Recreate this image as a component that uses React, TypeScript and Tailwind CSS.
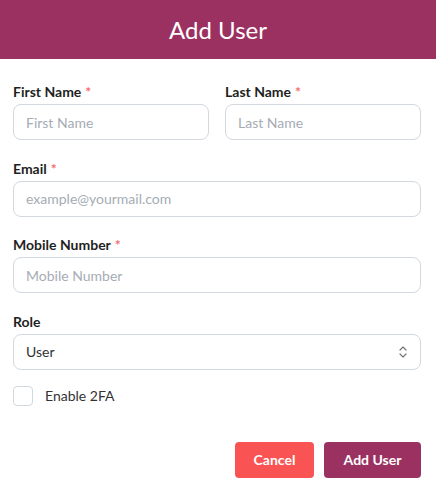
import React from "react";

function Label({ text, required }: { text: string; required?: boolean }) {
  return (
    <label className="block h-[20px] leading-[20px] text-[14px] font-bold text-[#1f1f1f] mb-[2px]">
      {text}
      {required && <span className="text-[#f26d6d] ml-[4px]">*</span>}
    </label>
  );
}

function Input({ placeholder }: { placeholder: string }) {
  return (
    <input
      placeholder={placeholder}
      className="block w-full h-[36px] rounded-[8px] border border-[#d3d7de] bg-white px-[12px] text-[14px] text-[#333] placeholder:text-[#a6acb5] outline-none"
      style={{ fontFamily: "Lato, sans-serif" }}
    />
  );
}

export default function App() {
  return (
    <div className="w-[436px] h-[492px] bg-white" style={{ fontFamily: "Lato, 'Noto Sans', sans-serif" }}>
      <div className="h-[59px] bg-[#9b3160] flex items-center justify-center">
        <h1 className="text-[24px] text-white font-normal">Add User</h1>
      </div>
      <div className="pl-[13px] pr-[15px] pt-[23px]">
        <div className="flex flex-col gap-[18.6px]">
          <div className="grid grid-cols-2 gap-[16px]">
            <div>
              <Label text="First Name" required />
              <Input placeholder="First Name" />
            </div>
            <div>
              <Label text="Last Name" required />
              <Input placeholder="Last Name" />
            </div>
          </div>
          <div>
            <Label text="Email" required />
            <Input placeholder="example@yourmail.com" />
          </div>
          <div>
            <Label text="Mobile Number" required />
            <Input placeholder="Mobile Number" />
          </div>
          <div>
            <Label text="Role" />
            <div className="relative h-[36px] rounded-[8px] border border-[#d3d7de] bg-white flex items-center px-[12px] text-[14px] text-[#333]">
              <span>User</span>
              <svg className="absolute right-[12px] top-1/2 -translate-y-1/2" width="10" height="14" viewBox="0 0 10 14" fill="none" stroke="#777" strokeWidth="1.2" strokeLinecap="round" strokeLinejoin="round">
                <path d="M2 5 L5 2 L8 5" />
                <path d="M2 9 L5 12 L8 9" />
              </svg>
            </div>
          </div>
        </div>
        <div className="flex items-center mt-[16px] h-[20px]">
          <div className="w-[20px] h-[20px] rounded-[4px] border border-[#d3d7de] bg-white" />
          <span className="ml-[12px] text-[14px] text-[#333]">Enable 2FA</span>
        </div>
        <div className="flex justify-end gap-[10px] mt-[36px]">
          <button className="w-[79px] h-[36px] rounded-[4px] bg-[#fa5353] text-white text-[14px] font-bold">Cancel</button>
          <button className="w-[97px] h-[36px] rounded-[4px] bg-[#9b3160] text-white text-[14px] font-bold">Add User</button>
        </div>
      </div>
    </div>
  );
}
